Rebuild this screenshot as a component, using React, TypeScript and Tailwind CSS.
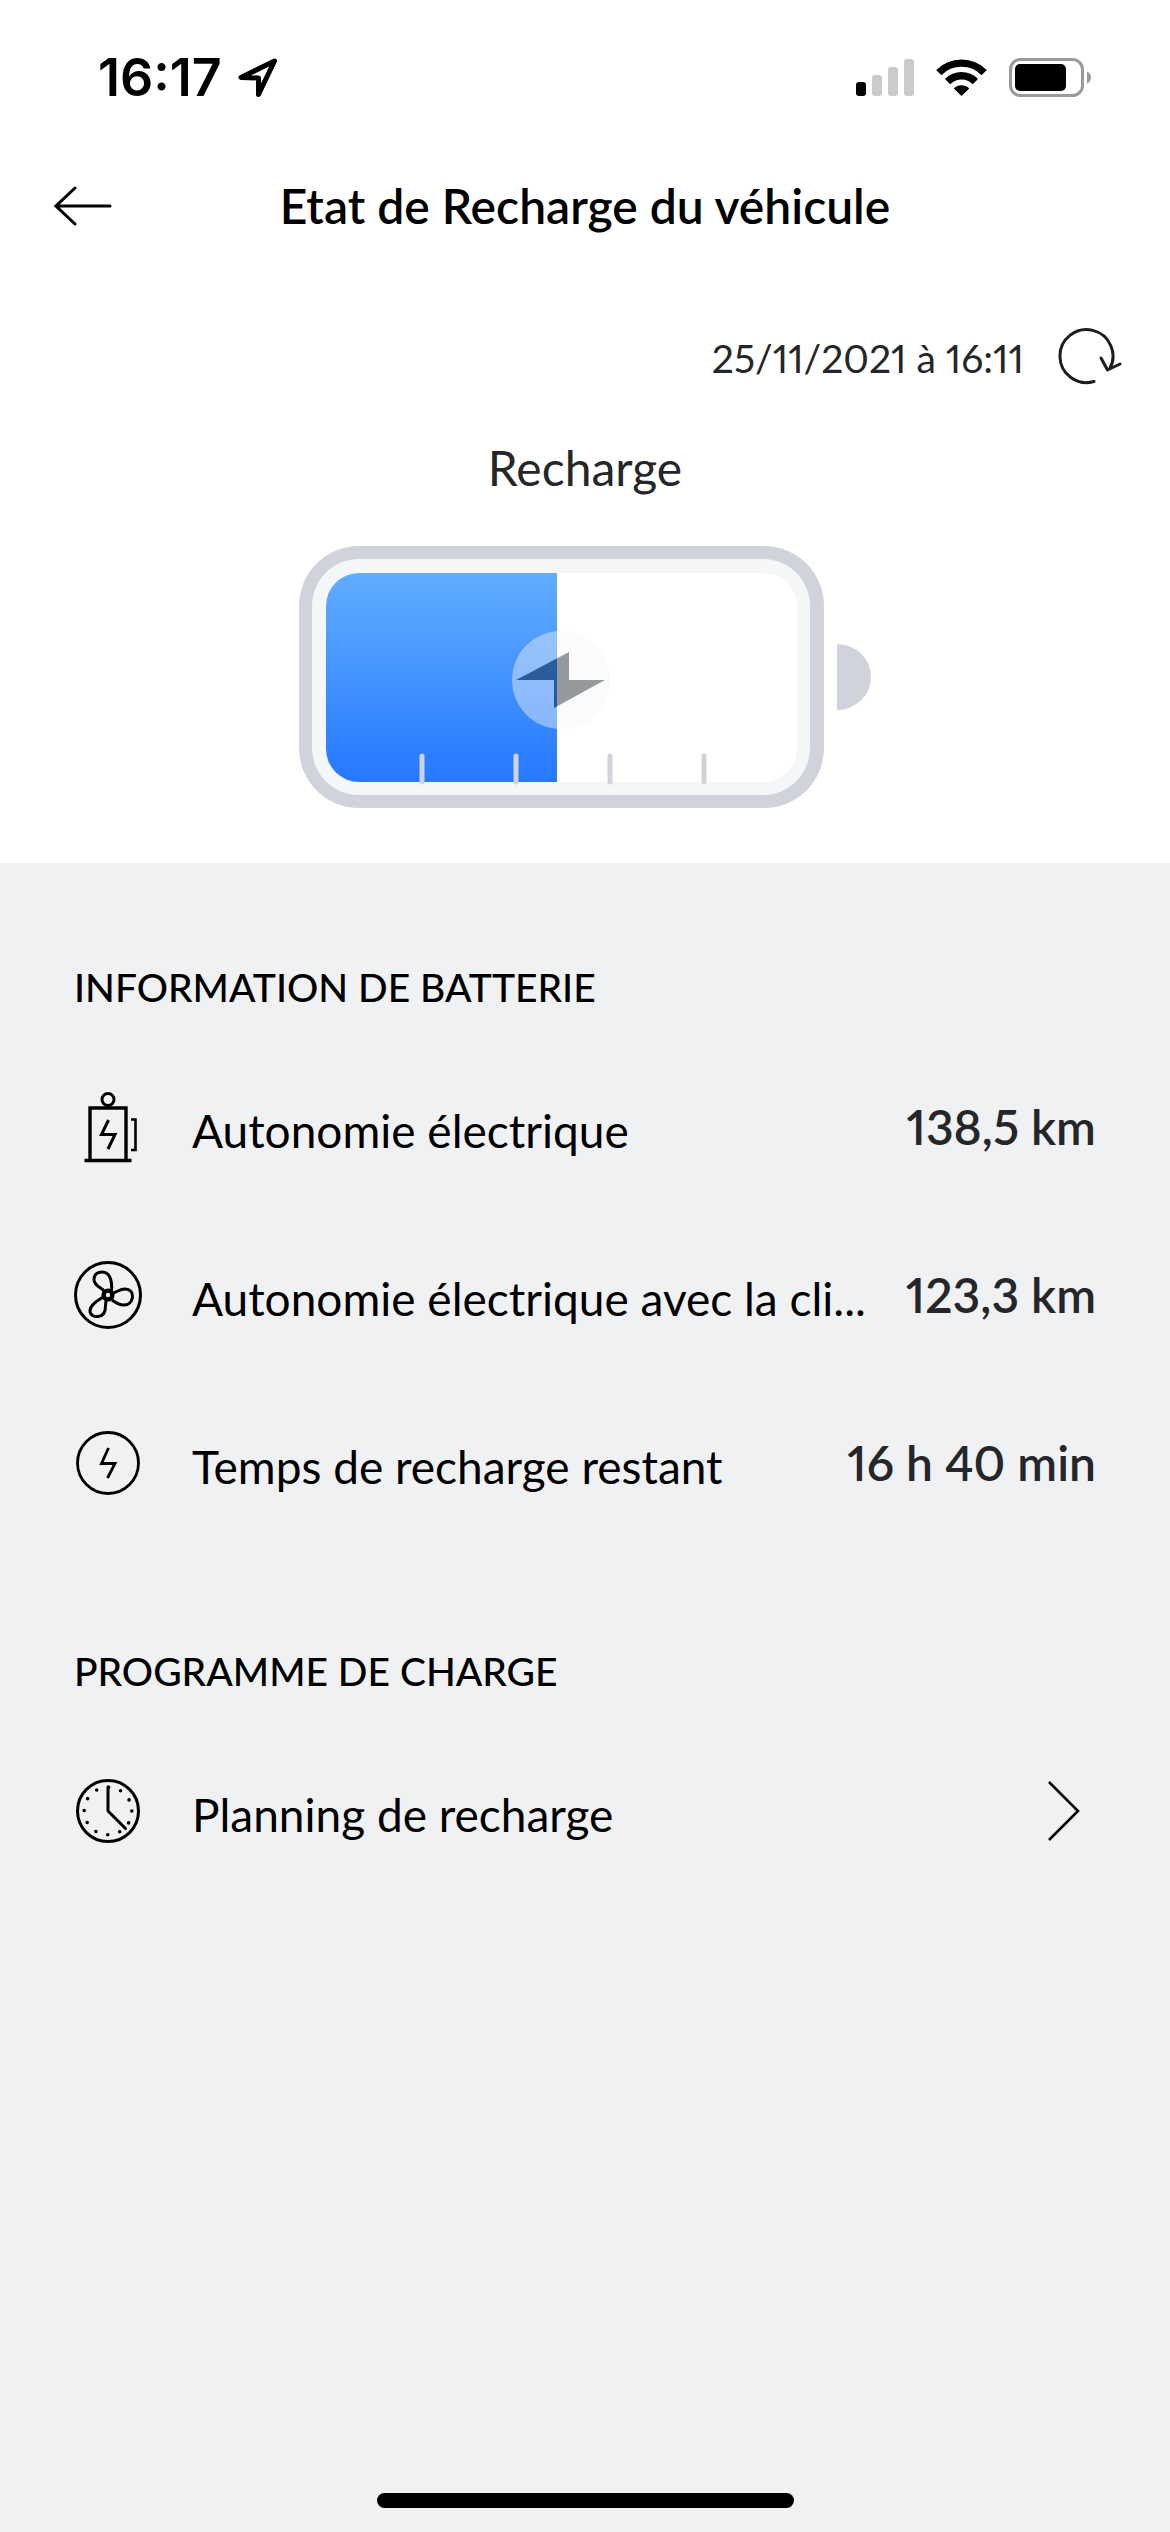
import React from 'react';

interface InfoRowProps {
  icon: React.ReactNode;
  label: string;
  value: string;
}

const LocationArrow: React.FC = () => (
  <svg className="w-10 h-10" viewBox="0 0 40 40" fill="none" stroke="currentColor" strokeWidth={5} strokeLinejoin="round">
    <path d="M36.5 3L3 19.5L20.5 20V36.5Z" />
  </svg>
);

const SignalBars: React.FC = () => (
  <svg className="w-[58px] h-[38px]" viewBox="0 0 58 38">
    <rect x="0" y="23" width="10" height="14" rx="3" fill="#000" />
    <rect x="16" y="16" width="10" height="21" rx="3" fill="#cbcbcb" />
    <rect x="32" y="8" width="10" height="29" rx="3" fill="#cbcbcb" />
    <rect x="48" y="0" width="10" height="37" rx="3" fill="#cbcbcb" />
  </svg>
);

const Wifi: React.FC = () => (
  <svg className="w-[51px] h-[38px]" viewBox="0 0 51 38" fill="none" stroke="#000" strokeWidth={7.4}>
    <path d="M2.8 13.6A32 32 0 0 1 48.2 13.6" />
    <path d="M11.6 22.6A19.6 19.6 0 0 1 39.4 22.6" />
    <path d="M17.8 29.4A11 11 0 0 1 33.2 29.4L25.5 37Z" fill="#000" stroke="none" />
  </svg>
);

const PhoneBattery: React.FC = () => (
  <svg className="w-[82px] h-10" viewBox="0 0 82 40">
    <rect x="1.5" y="1.5" width="72" height="36" rx="10" fill="none" stroke="#9a9a9a" strokeWidth={3} />
    <rect x="6" y="6" width="51" height="27" rx="5" fill="#000" />
    <path d="M78 13.5C80.6 14.6 82 16.8 82 19.5S80.6 24.4 78 25.5Z" fill="#9a9a9a" />
  </svg>
);

const BackArrow: React.FC = () => (
  <svg className="w-[58px] h-10" viewBox="0 0 58 40" fill="none" stroke="#000" strokeWidth={3} strokeLinecap="round">
    <path d="M56 20H2M21 2L2 20L21 38" />
  </svg>
);

const RefreshIcon: React.FC = () => (
  <svg className="w-[66px] h-[58px]" viewBox="0 0 66 58" fill="none" stroke="#1c1d1f" strokeWidth={3} strokeLinecap="round" strokeLinejoin="round">
    <path d="M38 54.5A26.5 26.5 0 1 1 53.6 42M45 31L51.5 43L64 37" />
  </svg>
);

const ChargeBattery: React.FC = () => (
  <svg className="w-[573px] h-[262px]" viewBox="0 0 573 262" role="img" aria-label="Recharge">
    <defs>
      <linearGradient id="charge" x1="0" y1="0" x2="0" y2="1">
        <stop offset="0" stopColor="#61adff" />
        <stop offset="1" stopColor="#2678ff" />
      </linearGradient>
      <clipPath id="cell">
        <rect x="27" y="27" width="471" height="209" rx="33" />
      </clipPath>
    </defs>
    <rect width="525" height="262" rx="60" fill="#d0d3dc" />
    <rect x="13" y="13" width="498" height="236" rx="47" fill="#f5f6f8" />
    <rect x="27" y="27" width="471" height="209" rx="33" fill="#fff" />
    <rect x="27" y="27" width="231" height="209" fill="url(#charge)" clipPath="url(#cell)" />
    <g opacity="0.43">
      <circle cx="262" cy="134" r="49" fill="#f6f6f6" />
      <path d="M217 134L270 106V134H306L255 162V134Z" fill="#08151f" />
    </g>
    <g stroke="#d0d3dc" strokeWidth={5} strokeLinecap="round">
      <path d="M123 210V236M217 210V236M311 210V236M405 210V236" />
    </g>
    <path d="M538 98A34 33 0 0 1 538 164Z" fill="#d0d3dc" />
  </svg>
);

const ChargerIcon: React.FC = () => (
  <svg className="w-[68px] h-[72px]" viewBox="0 0 68 72" fill="none" stroke="#000" strokeWidth={3}>
    <circle cx="34" cy="8.5" r="6" />
    <path d="M16 69V17H52V69" strokeWidth={3.4} />
    <path d="M10.5 69.5H57.5" strokeWidth={3.4} />
    <path d="M57 28.5H61.5V59H57" strokeWidth={2.6} />
    <path d="M34.5 29L27.5 43.5H41L34 58" />
  </svg>
);

const FanIcon: React.FC = () => (
  <svg className="w-[68px] h-[70px]" viewBox="0 0 68 70" fill="none" stroke="#000" strokeWidth={3}>
    <circle cx="34" cy="35" r="32.5" />
    <circle cx="34" cy="35" r="4.4" strokeWidth={4.4} />
    <path d="M30 31C28 28 20 26 20 19.5C20 14 24 12 28 12C35 12 38.5 19 37.5 31" />
    <path d="M39 33C43 32 46 29 51 29C56 29 59 32.5 58.5 37C58 42 54.5 45 50 45C46 45 42 43 38 40" />
    <path d="M29.500 37C23 41 16 45 16 51C16 55 20 57 24 56.500C30 56 31.500 51 31.500 46C31.500 43 32 41 32.500 40" />
  </svg>
);

const BoltIcon: React.FC = () => (
  <svg className="w-[68px] h-[68px]" viewBox="0 0 68 68" fill="none" stroke="#000" strokeWidth={2.8}>
    <circle cx="34" cy="34" r="30.5" />
    <path d="M34.5 19L27.5 34.5H41L33.5 49" />
  </svg>
);

const ClockIcon: React.FC = () => (
  <svg className="w-[68px] h-[68px]" viewBox="0 0 68 68" fill="none" stroke="#000" strokeWidth={3} strokeLinecap="round">
    <circle cx="34" cy="34" r="30.5" />
    <circle cx="34" cy="34" r="23.8" strokeWidth={3.6} strokeDasharray="0 12.46" />
    <path d="M34 10V34L51.5 51.5" strokeLinejoin="round" />
  </svg>
);

const ChevronRight: React.FC = () => (
  <svg className="w-8 h-[60px]" viewBox="0 0 32 60" fill="none" stroke="#000" strokeWidth={2.5}>
    <path d="M1 1L30 30L1 59" />
  </svg>
);

const SectionTitle: React.FC<{ children: React.ReactNode }> = ({ children }) => (
  <h2 className="mb-[26px] text-[39px] leading-[60px] font-medium">{children}</h2>
);

const InfoRow: React.FC<InfoRowProps> = ({ icon, label, value }) => (
  <li className="flex items-center h-42">
    <span className="shrink-0">{icon}</span>
    <span className="flex-1 pl-[50px] pt-2 text-[46px] leading-[60px] whitespace-nowrap">{label}</span>
    <span className="text-[48px] leading-[60px] font-semibold text-[#242629] whitespace-nowrap proportional-nums">{value}</span>
  </li>
);

const infoRows: InfoRowProps[] = [
  { icon: <ChargerIcon />, label: 'Autonomie électrique', value: '138,5 km' },
  { icon: <FanIcon />, label: 'Autonomie électrique avec la cli...', value: '123,3 km' },
  { icon: <BoltIcon />, label: 'Temps de recharge restant', value: '16 h 40 min' },
];

const App: React.FC = () => {
  return (
    <div className="flex flex-col min-h-screen bg-[#f0f1f3] text-black font-['Lato',sans-serif]">
      <div className="bg-white">
        <div className="flex items-center justify-between h-39 pl-[98px] pr-[79px]">
          <div className="flex items-center gap-4">
            <span className="font-['Inter',sans-serif] text-[52px] leading-[60px] font-semibold">16:17</span>
            <LocationArrow />
          </div>
          <div className="flex items-center gap-[22px]">
            <SignalBars />
            <Wifi />
            <PhoneBattery />
          </div>
        </div>

        <header className="grid grid-cols-[1fr_auto_1fr] items-center h-[100px] px-[54px]">
          <button aria-label="Retour" className="justify-self-start">
            <BackArrow />
          </button>
          <h1 className="text-[48px] leading-[60px] font-semibold">Etat de Recharge du véhicule</h1>
        </header>

        <div className="flex items-center justify-end gap-8 h-50 pr-12">
          <span className="pt-1 text-[39px] leading-[60px] text-[#242629] proportional-nums">25/11/2021 à 16:11</span>
          <button aria-label="Actualiser">
            <RefreshIcon />
          </button>
        </div>

        <div className="flex flex-col items-center pb-[55px]">
          <p className="mb-12 -mt-[18px] text-[48px] leading-[60px] text-[#242629]">Recharge</p>
          <ChargeBattery />
        </div>
      </div>

      <main className="px-[74px]">
        <section className="pt-[94px]">
          <SectionTitle>INFORMATION DE BATTERIE</SectionTitle>
          <ul>
            {infoRows.map((row) => (
              <InfoRow key={row.label} {...row} />
            ))}
          </ul>
        </section>

        <section className="pt-[94px]">
          <SectionTitle>PROGRAMME DE CHARGE</SectionTitle>
          <button className="flex items-center w-full h-42 pr-4 text-left">
            <ClockIcon />
            <span className="flex-1 pl-[50px] pt-2 text-[46px] leading-[60px]">Planning de recharge</span>
            <ChevronRight />
          </button>
        </section>
      </main>

      <div className="w-[417px] h-[15px] mx-auto mt-auto mb-6 rounded-full bg-black" />
    </div>
  );
};

export default App;
